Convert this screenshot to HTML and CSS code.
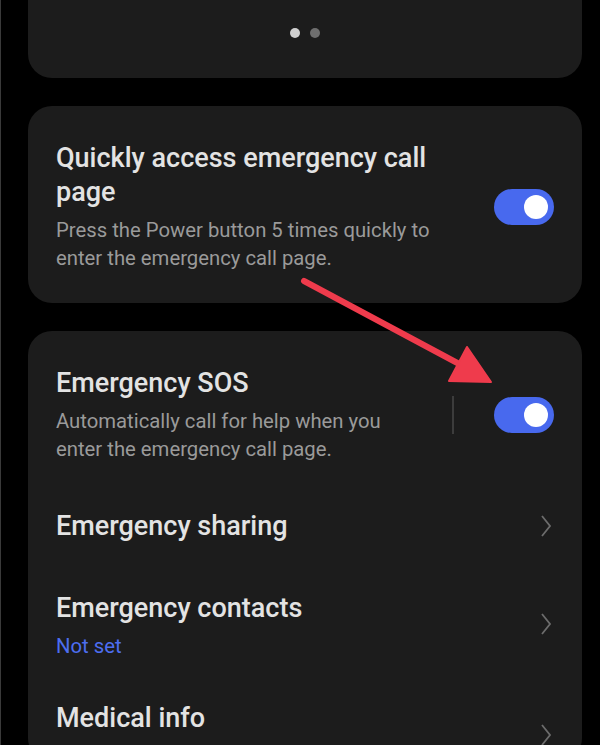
FILE: index.html
```html
<!DOCTYPE html>
<html lang="en">
<head>
  <meta charset="UTF-8" />
  <meta name="viewport" content="width=device-width, initial-scale=1.0"/>
  <title>Emergency SOS</title>
  <link rel="stylesheet" href="styles.css">
</head>
<body>
  <div class="screen">
    <div class="card pager">
      <span class="dot active"></span>
      <span class="dot"></span>
    </div>

    <div class="card single">
      <div class="row">
        <div class="text">
          <div class="title">Quickly access emergency call page</div>
          <div class="desc">Press the Power button 5 times quickly to enter the emergency call page.</div>
        </div>
        <div class="toggle on"><span class="knob"></span></div>
      </div>
    </div>

    <div class="card list">
      <div class="row sos">
        <div class="text">
          <div class="title">Emergency SOS</div>
          <div class="desc">Automatically call for help when you enter the emergency call page.</div>
        </div>
        <span class="divider"></span>
        <div class="toggle on"><span class="knob"></span></div>
      </div>
      <div class="row sharing">
        <div class="text">
          <div class="title">Emergency sharing</div>
        </div>
        <svg class="chevron" viewBox="0 0 12 24"><polyline points="2,2 10,12 2,22" /></svg>
      </div>
      <div class="row contacts">
        <div class="text">
          <div class="title">Emergency contacts</div>
          <div class="desc link">Not set</div>
        </div>
        <svg class="chevron" viewBox="0 0 12 24"><polyline points="2,2 10,12 2,22" /></svg>
      </div>
      <div class="row medical">
        <div class="text">
          <div class="title">Medical info</div>
        </div>
        <svg class="chevron" viewBox="0 0 12 24"><polyline points="2,2 10,12 2,22" /></svg>
      </div>
    </div>

    <!-- annotation arrow drawn over the screenshot -->
    <svg class="arrow" viewBox="0 0 600 745">
      <line x1="303" y1="281" x2="462" y2="366" />
      <polygon points="490,382 448,381 466,347" />
    </svg>
  </div>
</body>
</html>
```

FILE: styles.css
```css
html, body {
  margin: 0;
  background: #000;
}

body {
  font-family: Roboto, "Noto Sans", sans-serif;
  border-left: 1px solid #3a3a3a;
}

.screen {
  position: relative;
  height: 745px;
  overflow: hidden;
  padding: 0 18px 0 27px;
  display: flex;
  flex-direction: column;
  gap: 28px;
}

.card {
  background: #1c1c1c;
  border-radius: 24px;
}

.pager {
  height: 78px;
  border-radius: 0 0 24px 24px;
  display: flex;
  justify-content: center;
  align-items: center;
  gap: 10px;
  flex-shrink: 0;
  box-sizing: border-box;
  padding-bottom: 12px;
}

.dot {
  width: 10px;
  height: 10px;
  border-radius: 50%;
  background: #6e6e6e;
}

.dot.active {
  background: #cfcfcf;
}

.single {
  padding: 35px 28px 31px 28px;
  flex-shrink: 0;
}

.list {
  padding: 13px 28px 0 28px;
  flex-shrink: 0;
}

.row {
  display: flex;
  align-items: center;
}

.text {
  flex: 1;
}

.title {
  font-size: 27px;
  line-height: 34px;
  font-weight: 500;
  color: #e3e3e3;
  max-width: 390px;
}

.desc {
  margin-top: 7px;
  font-size: 20.3px;
  line-height: 28px;
  color: #9a9a9a;
  max-width: 390px;
}

.sos .desc {
  max-width: 372px;
}

.desc.link {
  color: #4d6ef0;
}

.toggle {
  width: 60px;
  height: 36px;
  border-radius: 18px;
  background: #4869ee;
  box-sizing: border-box;
  padding: 6px;
  display: flex;
  justify-content: flex-end;
  align-items: center;
  flex-shrink: 0;
}

.knob {
  width: 24px;
  height: 24px;
  border-radius: 50%;
  background: #fff;
}

.divider {
  width: 2px;
  height: 38px;
  background: #3c3c3c;
  margin-right: 40px;
}

.sos {
  padding: 22px 0;
}

.sharing {
  padding: 24px 0 25px;
}

.contacts {
  padding: 23px 0 14px;
}

.medical {
  padding: 15px 0;
}

.chevron {
  width: 12px;
  height: 24px;
  margin-right: 2px;
  fill: none;
  stroke: #6c6c6c;
  stroke-width: 1.8;
}

.contacts .chevron {
  margin-top: -4px;
}

.medical .chevron {
  margin-top: 34px;
}

.arrow {
  position: absolute;
  left: 0;
  top: 0;
  width: 600px;
  height: 745px;
  pointer-events: none;
}

.arrow line {
  stroke: #ef3b4c;
  stroke-width: 6;
  stroke-linecap: round;
}

.arrow polygon {
  fill: #ef3b4c;
  stroke: #ef3b4c;
  stroke-width: 2;
  stroke-linejoin: round;
}
```
